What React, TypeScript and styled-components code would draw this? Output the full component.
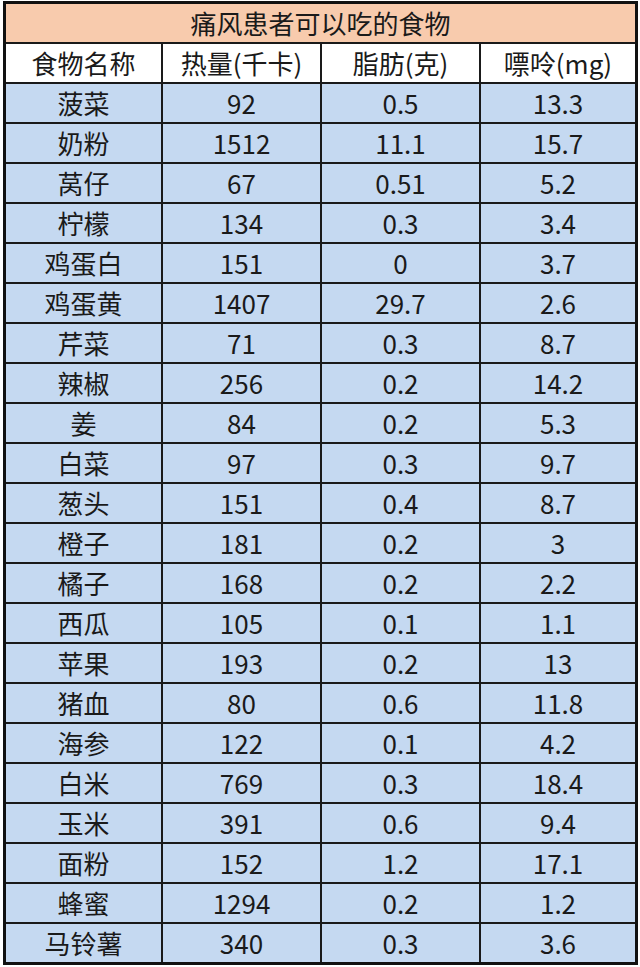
import styled, { createGlobalStyle } from "styled-components";

const GlobalStyle = createGlobalStyle`
  html, body {
    margin: 0;
    padding: 0;
    background: #ffffff;
  }
  body {
    font-family: "Noto Sans CJK SC", "Noto Sans", sans-serif;
    color: #1a1a1a;
  }
`;

const foods = [
  { name: "菠菜", kcal: "92", fat: "0.5", purine: "13.3" },
  { name: "奶粉", kcal: "1512", fat: "11.1", purine: "15.7" },
  { name: "莴仔", kcal: "67", fat: "0.51", purine: "5.2" },
  { name: "柠檬", kcal: "134", fat: "0.3", purine: "3.4" },
  { name: "鸡蛋白", kcal: "151", fat: "0", purine: "3.7" },
  { name: "鸡蛋黄", kcal: "1407", fat: "29.7", purine: "2.6" },
  { name: "芹菜", kcal: "71", fat: "0.3", purine: "8.7" },
  { name: "辣椒", kcal: "256", fat: "0.2", purine: "14.2" },
  { name: "姜", kcal: "84", fat: "0.2", purine: "5.3" },
  { name: "白菜", kcal: "97", fat: "0.3", purine: "9.7" },
  { name: "葱头", kcal: "151", fat: "0.4", purine: "8.7" },
  { name: "橙子", kcal: "181", fat: "0.2", purine: "3" },
  { name: "橘子", kcal: "168", fat: "0.2", purine: "2.2" },
  { name: "西瓜", kcal: "105", fat: "0.1", purine: "1.1" },
  { name: "苹果", kcal: "193", fat: "0.2", purine: "13" },
  { name: "猪血", kcal: "80", fat: "0.6", purine: "11.8" },
  { name: "海参", kcal: "122", fat: "0.1", purine: "4.2" },
  { name: "白米", kcal: "769", fat: "0.3", purine: "18.4" },
  { name: "玉米", kcal: "391", fat: "0.6", purine: "9.4" },
  { name: "面粉", kcal: "152", fat: "1.2", purine: "17.1" },
  { name: "蜂蜜", kcal: "1294", fat: "0.2", purine: "1.2" },
  { name: "马铃薯", kcal: "340", fat: "0.3", purine: "3.6" },
];

const headings = ["食物名称", "热量(千卡)", "脂肪(克)", "嘌呤(mg)"];

const Sheet = styled.div`
  margin: 1px 0 0 3px;
  width: 635px;
  box-sizing: border-box;
  border: 3px solid #111111;
  display: grid;
  grid-template-columns: 155px 157px 157px 154px;
  background: #1a1a1a;
  row-gap: 2px;
  column-gap: 2px;
`;

const TitleCell = styled.div`
  grid-column: 1 / -1;
  height: 38px;
  background: #f8cbad;
  display: flex;
  align-items: center;
  justify-content: center;
  font-size: 26px;
  line-height: 1;
`;

const Cell = styled.div<{ $tone: "head" | "body" }>`
  height: 38px;
  background: ${({ $tone }) => ($tone === "head" ? "#ffffff" : "#c5d9f1")};
  display: flex;
  align-items: center;
  justify-content: center;
  font-size: 26px;
  line-height: 1;
  white-space: nowrap;
`;

const App = () => {
  return (
    <>
      <GlobalStyle />
      <Sheet>
        <TitleCell>痛风患者可以吃的食物</TitleCell>
        {headings.map((label) => (
          <Cell $tone="head" key={label}>
            {label}
          </Cell>
        ))}
        {foods.map(({ name, kcal, fat, purine }) => [
          <Cell $tone="body" key={name + "-n"}>{name}</Cell>,
          <Cell $tone="body" key={name + "-k"}>{kcal}</Cell>,
          <Cell $tone="body" key={name + "-f"}>{fat}</Cell>,
          <Cell $tone="body" key={name + "-p"}>{purine}</Cell>,
        ])}
      </Sheet>
    </>
  );
};

export default App;
